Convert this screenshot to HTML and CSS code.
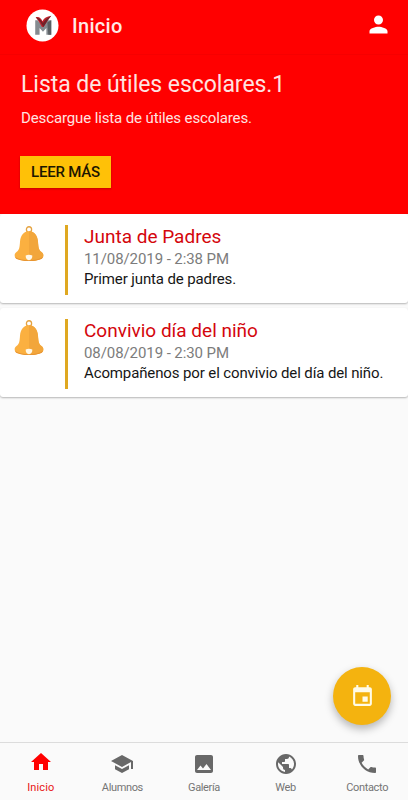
FILE: index.html
```html
<!doctype html>
<html lang="es">
  <head>
    <meta charset="UTF-8" />
    <title>Inicio</title>
    <link rel="stylesheet" href="styles.css">
  </head>
  <body>
    <div class="app">
      <header class="topbar">
        <svg class="logo" viewBox="0 0 34 34">
          <circle cx="17" cy="17" r="16.500" fill="#fff" />
          <path d="M9.500 11.500l2.500 0 5.500 6 5-6H26V26.500h-5v-7l-3.500 4-3.500-4v7H9.500z" fill="#858b90" />
          <path d="M22 14l4-2.500V26.500h-3z" fill="#5a5f63" />
          <path d="M10 8.500c3-1.200 5.500.5 7 4 1.500-3 4.500-5 9-5.500l-3.500 4.500-4.500 7h-1.500l-3.500-6z" fill="#c0212c" />
          <path d="M10 8.500l4 1.500 3.500 4.500 3-4L26 7l-3.500 4.500-4.500 7-3.500-5.500z" fill="#70222a" />
        </svg>
        <h1 class="page-title">Inicio</h1>
        <svg class="user-icon" viewBox="0 0 24 24">
          <path d="M12 12c2.210 0 4-1.790 4-4s-1.790-4-4-4-4 1.790-4 4 1.790 4 4 4zm0 2c-2.670 0-8 1.340-8 4v2h16v-2c0-2.660-5.330-4-8-4z" />
        </svg>
      </header>

      <section class="banner">
        <h2 class="banner-title">Lista de útiles escolares.1</h2>
        <p class="banner-text">Descargue lista de útiles escolares.</p>
        <button class="banner-btn">LEER MÁS</button>
      </section>

      <main class="notices">
        <article class="notice">
          <svg class="bell" viewBox="0 0.700 30 32" preserveAspectRatio="none">
            <circle cx="15" cy="4" r="2.600" fill="none" stroke="#e5a341" stroke-width="1.300" />
            <path d="M15 5.500c-5.500 0-8.500 4-9 9.500-.4 5-.5 7.500-3.500 9.500-1.400 1-2 2-1.800 3.500.1 1.500 1 2.500 3 3 6.500 2.300 16.100 2.300 22.600 0 2-.5 2.900-1.500 3-3 .2-1.500-.4-2.500-1.800-3.500-3-2-3.100-4.500-3.500-9.500-.5-5.500-3.500-9.500-9-9.500z" fill="#fbb040" />
            <path d="M15 5.500c5.500 0 8.500 4 9 9.500.4 5 .5 7.500 3.500 9.500 1.400 1 2 2 1.800 3.500-.1 1.500-1 2.500-3 3-3.500 1.200-7.300 1.700-11.300 1.700z" fill="#f2a63b" />
            <path d="M1 29c8 4 20 4 28 0-.4 1.200-1.200 1.700-2.700 2-6.500 2.300-16.100 2.300-22.600 0-1.500-.3-2.300-.8-2.700-2z" fill="#e79432" />
            <path d="M11.700 27.700c2-1 4.600-1 6.600 0 .3 2.300-1.200 4.200-3.300 4.200s-3.600-1.900-3.300-4.200z" fill="#fff8e8" />
          </svg>
          <div class="notice-body">
            <h3 class="notice-title">Junta de Padres</h3>
            <p class="notice-date">11/08/2019 - 2:38 PM</p>
            <p class="notice-text">Primer junta de padres.</p>
          </div>
        </article>

        <article class="notice">
          <svg class="bell" viewBox="0 0.700 30 32" preserveAspectRatio="none">
            <circle cx="15" cy="4" r="2.600" fill="none" stroke="#e5a341" stroke-width="1.300" />
            <path d="M15 5.500c-5.500 0-8.500 4-9 9.500-.4 5-.5 7.500-3.500 9.500-1.400 1-2 2-1.800 3.500.1 1.500 1 2.500 3 3 6.500 2.300 16.100 2.300 22.600 0 2-.5 2.900-1.500 3-3 .2-1.500-.4-2.500-1.800-3.500-3-2-3.100-4.500-3.500-9.500-.5-5.500-3.500-9.500-9-9.500z" fill="#fbb040" />
            <path d="M15 5.500c5.500 0 8.500 4 9 9.500.4 5 .5 7.500 3.500 9.500 1.400 1 2 2 1.800 3.500-.1 1.500-1 2.500-3 3-3.500 1.200-7.300 1.700-11.300 1.700z" fill="#f2a63b" />
            <path d="M1 29c8 4 20 4 28 0-.4 1.200-1.200 1.700-2.700 2-6.500 2.300-16.100 2.300-22.600 0-1.500-.3-2.300-.8-2.700-2z" fill="#e79432" />
            <path d="M11.700 27.700c2-1 4.600-1 6.600 0 .3 2.300-1.200 4.200-3.300 4.200s-3.600-1.900-3.300-4.200z" fill="#fff8e8" />
          </svg>
          <div class="notice-body">
            <h3 class="notice-title">Convivio día del niño</h3>
            <p class="notice-date">08/08/2019 - 2:30 PM</p>
            <p class="notice-text">Acompañenos por el convivio del día del niño.</p>
          </div>
        </article>
      </main>

      <button class="fab" aria-label="Calendario">
        <svg viewBox="0 0 24 24">
          <path d="M17 12h-5v5h5v-5zM16 1v2H8V1H6v2H5c-1.110 0-1.990.9-1.990 2L3 19c0 1.100.89 2 2 2h14c1.100 0 2-.9 2-2V5c0-1.100-.9-2-2-2h-1V1h-2zm3 18H5V8h14v11z" />
        </svg>
      </button>

      <nav class="tabs">
        <a class="tab active">
          <svg viewBox="0 0 24 24"><path d="M10 20v-6h4v6h5v-8h3L12 3 2 12h3v8z" /></svg>
          <span>Inicio</span>
        </a>
        <a class="tab">
          <svg viewBox="0 0 24 24"><path d="M5 13.180v4L12 21l7-3.820v-4L12 17l-7-3.820zM12 3L1 9l11 6 9-4.910V17h2V9L12 3z" /></svg>
          <span>Alumnos</span>
        </a>
        <a class="tab">
          <svg viewBox="0 0 24 24"><path d="M21 19V5c0-1.100-.9-2-2-2H5c-1.100 0-2 .9-2 2v14c0 1.100.9 2 2 2h14c1.100 0 2-.9 2-2zM8.500 13.500l2.500 3.010L14.500 12l4.500 6H5l3.500-4.500z" /></svg>
          <span>Galería</span>
        </a>
        <a class="tab">
          <svg viewBox="0 0 24 24"><path d="M12 2C6.480 2 2 6.480 2 12s4.480 10 10 10 10-4.480 10-10S17.520 2 12 2zm-1 17.930c-3.950-.49-7-3.850-7-7.930 0-.62.080-1.210.21-1.790L9 15v1c0 1.100.9 2 2 2v1.930zm6.900-2.540c-.26-.81-1-1.390-1.900-1.390h-1v-3c0-.55-.45-1-1-1H8v-2h2c.55 0 1-.45 1-1V7h2c1.100 0 2-.9 2-2v-.41c2.930 1.190 5 4.060 5 7.410 0 2.080-.8 3.970-2.100 5.390z" /></svg>
          <span>Web</span>
        </a>
        <a class="tab">
          <svg viewBox="0 0 24 24"><path d="M6.620 10.790c1.440 2.830 3.760 5.140 6.590 6.590l2.200-2.200c.27-.27.670-.36 1.020-.24 1.120.37 2.330.57 3.570.57.55 0 1 .45 1 1V20c0 .55-.45 1-1 1-9.390 0-17-7.610-17-17 0-.55.45-1 1-1h3.500c.55 0 1 .45 1 1 0 1.250.2 2.450.57 3.570.11.35.030.74-.25 1.020l-2.200 2.200z" /></svg>
          <span>Contacto</span>
        </a>
      </nav>
    </div>
  </body>
</html>
```
FILE: styles.css
```css
:root {
  --red: #ff0000;
  --title-red: #d4060c;
  --amber: #f4b30f;
  --button-yellow: #ffc107;
  --gray: #757575;
  --page-bg: #fafafa;
}

* {
  box-sizing: border-box;
  margin: 0;
  padding: 0;
  font-family: Roboto, sans-serif;
}

.app {
  position: relative;
  display: flex;
  flex-direction: column;
  height: 100vh;
  overflow: hidden;
  background: var(--page-bg);
}

.topbar {
  display: flex;
  align-items: center;
  height: 54px;
  padding: 0 16px 4px 26px;
  background: var(--red);
  color: #ffe9e6;
}

.logo {
  width: 33px;
  height: 33px;
}

.page-title {
  margin-left: 13px;
  padding-top: 2px;
  font-size: 20px;
  font-weight: 500;
  letter-spacing: 0.3px;
  line-height: 24px;
}

.user-icon {
  width: 27px;
  height: 27px;
  margin-left: auto;
  margin-bottom: 2px;
  fill: #fff;
}

.banner {
  height: 160px;
  padding: 16px 20px 0;
  border-top: 1px solid #f60000;
  background: var(--red);
  color: #ffe3e0;
}

.banner-title {
  padding-left: 1px;
  font-size: 23px;
  font-weight: 400;
  letter-spacing: -0.05px;
  line-height: 28px;
}

.banner-text {
  margin-top: 10px;
  padding-left: 1px;
  font-size: 15px;
  letter-spacing: -0.12px;
  line-height: 18px;
}

.banner-btn {
  display: block;
  width: 91px;
  height: 32px;
  margin-top: 29px;
  border: none;
  background: var(--button-yellow);
  color: #1d1600;
  font-size: 15px;
  font-weight: 500;
  letter-spacing: -0.2px;
  box-shadow: 0 1px 2px rgba(0, 0, 0, 0.25);
}

.notices {
  display: flex;
  flex: 1;
  flex-direction: column;
  gap: 5.4px;
}

.notice {
  display: flex;
  align-items: flex-start;
  height: 89px;
  padding: 11px 0 0 14px;
  border-radius: 3px;
  background: #fff;
  box-shadow: 0 1px 2px rgba(0, 0, 0, 0.28);
}

.bell {
  width: 30px;
  height: 35px;
  margin-top: 1px;
}

.notice-body {
  height: 70px;
  margin-left: 21px;
  padding-left: 16px;
  border-left: 3px solid #dfa821;
  white-space: nowrap;
}

.notice-title {
  color: var(--title-red);
  font-size: 19px;
  font-weight: 400;
  line-height: 24px;
}

.notice-date {
  color: #7c7c7c;
  font-size: 15px;
  letter-spacing: -0.08px;
  line-height: 20px;
}

.notice-text {
  color: #161616;
  font-size: 15px;
  letter-spacing: -0.12px;
  line-height: 20px;
}

.fab {
  position: absolute;
  right: 17px;
  bottom: 75px;
  display: flex;
  align-items: center;
  justify-content: center;
  width: 58px;
  height: 58px;
  border: none;
  border-radius: 50%;
  background: var(--amber);
  box-shadow: 0 4px 9px rgba(0, 0, 0, 0.28);
}

.fab svg {
  width: 25px;
  height: 25px;
  fill: #fffbe8;
}

.tabs {
  display: flex;
  height: 58px;
  border-top: 1px solid #dcdcdc;
  background: var(--page-bg);
}

.tab {
  display: flex;
  flex: 1;
  flex-direction: column;
  align-items: center;
  padding-top: 9px;
  color: var(--gray);
  font-size: 11px;
  letter-spacing: -0.35px;
  line-height: 14px;
}

.tab svg {
  width: 24px;
  height: 24px;
  margin-bottom: 5px;
  fill: #686868;
}

.tab.active {
  padding-top: 7px;
  color: #e81515;
  letter-spacing: 0.1px;
}

.tab.active svg {
  margin-bottom: 7px;
  fill: var(--red);
}
```
